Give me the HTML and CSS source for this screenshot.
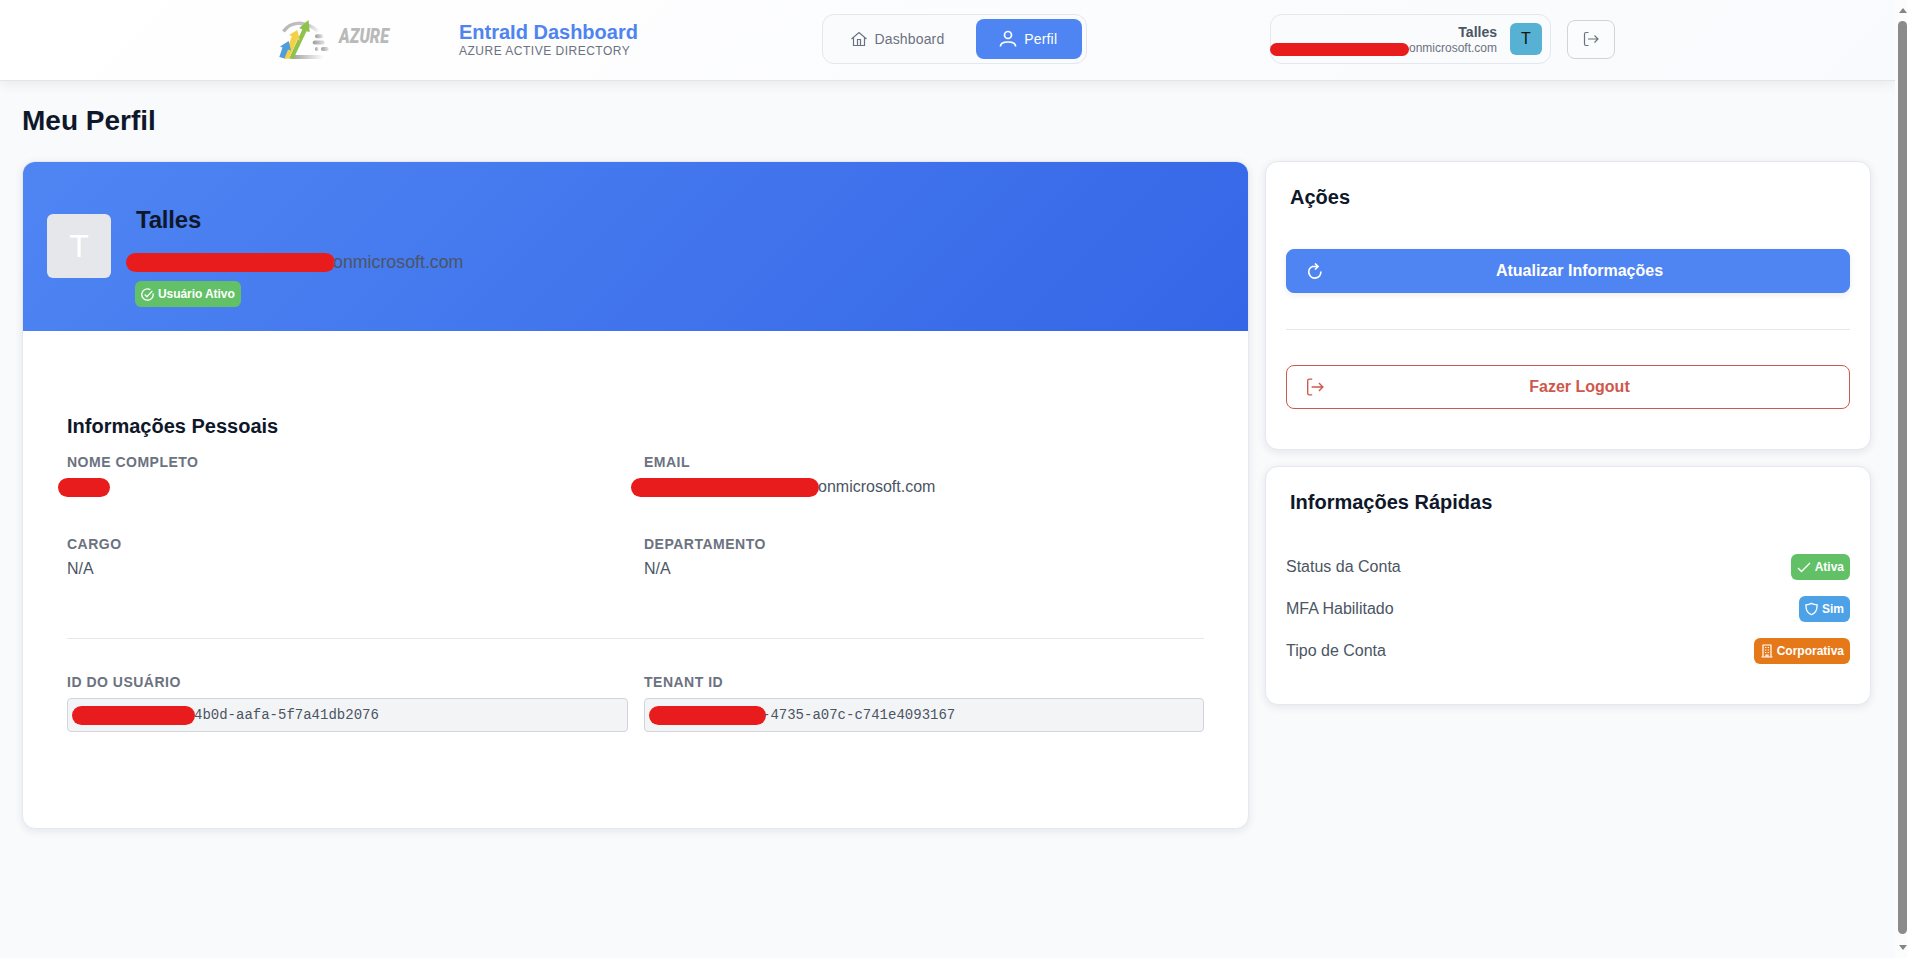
FILE: index.html
```html
<!DOCTYPE html>
<html lang="pt-BR">
<head>
<meta charset="utf-8">
<title>EntraId Dashboard</title>
<link rel="stylesheet" href="styles.css">
</head>
<body>
<div class="app">
  <div class="page">
    <header class="topbar">
      <div class="topbar-inner">
        <div class="brand">
          <svg class="logo" width="166" height="44" viewBox="0 0 166 44">
            <defs>
              <linearGradient id="base" x1="0" x2="1" y1="0" y2="0"><stop offset="0" stop-color="#a0a0a0"/><stop offset="1" stop-color="#ffffff"/></linearGradient>
              <linearGradient id="arc" x1="0" x2="1" y1="0" y2="0"><stop offset="0" stop-color="#b8b8b8"/><stop offset=".7" stop-color="#c4c4c4"/><stop offset="1" stop-color="#f4f4f4"/></linearGradient>
              <linearGradient id="dash" x1="0" x2="1" y1="0" y2="0"><stop offset="0" stop-color="#9c9c9c"/><stop offset="1" stop-color="#e4e4e4"/></linearGradient>
            </defs>
            <path d="M5.500 14.500C12 5 25 2.500 40 14" fill="none" stroke="url(#arc)" stroke-width="3.500"/>
            <path d="M16 38H46V42H14Z" fill="url(#base)"/>
            <g fill="url(#dash)"><rect x="37" y="17.300" width="8" height="4" rx="2"/><rect x="34.700" y="23.500" width="12" height="4" rx="2"/><rect x="37" y="30" width="3.500" height="4" rx="1.700"/><rect x="43" y="30" width="7.700" height="4" rx="2"/></g>
            <path d="M11 41.700L24.300 12.500L21.200 11L30.500 3L31.700 15L28.500 14.300L15.500 41.700Z" fill="#8fc14b"/>
            <path d="M5.800 41.700L13.800 19.300L11 18L19.300 13L22 23.500L19.300 22.500L11 41.700Z" fill="#f3d048"/>
            <path d="M1.300 40L4.500 30.500L2 29.500L10.700 24L13 33.500L10 32.500L6.500 41.500Z" fill="#4f9edb"/>
            <text x="61" y="26" class="logo-text" textLength="50" lengthAdjust="spacingAndGlyphs">AZURE</text>
          </svg>
          <div class="brand-text">
            <div class="brand-title">EntraId Dashboard</div>
            <div class="brand-sub">AZURE ACTIVE DIRECTORY</div>
          </div>
        </div>
        <nav class="nav">
          <a class="nav-item"><svg width="16" height="16" viewBox="0 0 16 16" class="icon"><path d="M.5 8L8 1.500 15.500 8M2.500 6.500V14.500H13.500V6.500M6.500 14.500V8.500H9.500V14.500"/></svg>Dashboard</a>
          <a class="nav-item active"><svg width="16" height="16" viewBox="0 0 16 16" class="icon person"><circle cx="8" cy="4" r="3.500"/><path d="M.4 15.500C.4 12.500 3 11 8 11s7.600 1.500 7.600 4.500"/></svg>Perfil</a>
        </nav>
        <div class="account">
          <div class="user">
            <div class="user-text">
              <div class="user-name">Talles</div>
              <div class="user-mail"><span class="mask mask-user"></span>onmicrosoft.com</div>
            </div>
            <div class="avatar">T</div>
          </div>
          <button class="exit"><svg width="16" height="16" viewBox="0 0 16 16" class="icon"><path d="M5.500 1.500H3Q1.500 1.500 1.500 3V13Q1.500 14.500 3 14.500H5.500M5 8H15M11.500 4.500L15 8L11.500 11.500"/></svg></button>
        </div>
      </div>
    </header>
    <main>
      <h1>Meu Perfil</h1>
      <div class="columns">
        <section class="card profile">
          <div class="hero">
            <div class="hero-avatar">T</div>
            <div class="hero-text">
              <h2>Talles</h2>
              <div class="hero-mail"><span class="mask mask-hero"></span>onmicrosoft.com</div>
              <span class="badge green"><svg width="13" height="13" viewBox="0 0 16 16" class="icon check-circle"><path d="M14.800 6.500A7 7 0 1 1 11.500 2M4.500 8L7.300 10.800L14 3.500"/></svg>Usuário Ativo</span>
            </div>
          </div>
          <div class="details">
            <h3>Informações Pessoais</h3>
            <div class="grid">
              <div class="field"><div class="label">NOME COMPLETO</div><div class="value"><span class="mask mask-name"></span></div></div>
              <div class="field"><div class="label">EMAIL</div><div class="value"><span class="mask mask-mail"></span>onmicrosoft.com</div></div>
              <div class="field"><div class="label">CARGO</div><div class="value">N/A</div></div>
              <div class="field"><div class="label">DEPARTAMENTO</div><div class="value">N/A</div></div>
            </div>
            <hr>
            <div class="grid">
              <div class="field"><div class="label">ID DO USUÁRIO</div><div class="code"><span class="mask mask-id"></span>4b0d-aafa-5f7a41db2076</div></div>
              <div class="field"><div class="label">TENANT ID</div><div class="code"><span class="mask mask-tenant"></span>-4735-a07c-c741e4093167</div></div>
            </div>
          </div>
        </section>
        <aside>
          <section class="card actions">
            <h3>Ações</h3>
            <button class="btn primary"><svg width="16" height="16" viewBox="0 0 16 16" class="icon refresh"><path d="M5.500 3.500A6 6 0 1 0 13.800 8.500M5 3.500H10.500M8 .5L11 3.500L8 6.500"/></svg><span>Atualizar Informações</span></button>
            <hr>
            <button class="btn danger"><svg width="18" height="18" viewBox="0 0 16 16" class="icon"><path d="M5.500 1H3Q1.500 1 1.500 2.500V13.500Q1.500 15 3 15H5.500M5 8H15M11.500 4.500L15 8L11.500 11.500"/></svg><span>Fazer Logout</span></button>
          </section>
          <section class="card quick">
            <h3>Informações Rápidas</h3>
            <div class="row">Status da Conta<span class="badge green"><svg width="14" height="14" viewBox="0 0 14 14" class="icon badge-icon"><path d="M1 8L4.500 11.500L13 3"/></svg>Ativa</span></div>
            <div class="row">MFA Habilitado<span class="badge blue"><svg width="13" height="14" viewBox="0 0 14 14" class="icon badge-icon"><path d="M7 1Q4.500 2.500 1 2.500C.8 8 2.500 11.500 7 13C11.500 11.500 13.200 8 13 2.500Q9.500 2.500 7 1Z"/></svg>Sim</span></div>
            <div class="row">Tipo de Conta<span class="badge orange"><svg width="12" height="14" viewBox="0 0 12 14" class="icon building"><path d="M2 13V1H10V13M.5 13H11.500M4 3.500H5.300M6.700 3.500H8M4 6H5.300M6.700 6H8M4 8.500H5.300M6.700 8.500H8M5 13V11H7V13"/></svg>Corporativa</span></div>
          </section>
        </aside>
      </div>
    </main>
  </div>
  <div class="scrollbar"><i class="arrow up"></i><i class="thumb"></i><i class="arrow down"></i></div>
</div>
</body>
</html>
```
FILE: styles.css
```css
* { box-sizing: border-box; }
body { margin: 0; font-family: "Liberation Sans", Arial, sans-serif; color: #4b5563; overflow: hidden; }
h1, h2, h3 { margin: 0; color: #0f172a; font-weight: 700; }
button { font-family: inherit; margin: 0; }
hr { margin: 0; border: 0; height: 1px; background: #e5e7eb; }

.app { display: flex; height: 958px; background: #f9fafc; }
.page { width: 1895px; flex: none; }
.icon { fill: none; stroke: currentColor; stroke-width: 1.2; flex: none; }

.topbar { height: 81px; border-bottom: 1px solid #e1e4ed; background: linear-gradient(135deg, #ffffff 0%, #f9fafd 100%); box-shadow: 0 3px 12px rgba(0, 0, 0, .07); }
.topbar-inner { width: 1337px; height: 78px; margin-left: 278px; display: flex; align-items: center; justify-content: space-between; }
.brand { display: flex; align-items: center; gap: 15px; width: 360px; }
.logo { flex: none; }
.logo-text { font: italic 900 19.500px Roboto, sans-serif; fill: #b9b9b9; }
.brand-title { font-size: 20px; line-height: 24px; font-weight: 700; color: #4f84f0; white-space: nowrap; }
.brand-sub { font-size: 12px; line-height: 14px; letter-spacing: .5px; color: #6b7280; white-space: nowrap; }

.nav { display: flex; gap: 8px; width: 265px; padding: 4px; border: 1px solid #e5e7ee; border-radius: 12px; background: #fafbfd; }
.nav-item { display: flex; align-items: center; gap: 8px; height: 40px; padding: 0 24px; font-size: 14px; letter-spacing: .15px; color: #6b7280; border-radius: 8px; }
.nav-item.active { flex: 1; padding: 0 0 0 24px; background: #4f85f3; color: #fff; }
.person { stroke-width: 1.7; overflow: visible; }

.account { display: flex; align-items: center; gap: 16px; }
.user { display: flex; align-items: center; gap: 13px; height: 50px; width: 281px; padding: 0 8px; justify-content: flex-end; border: 1px solid #e5e7ee; border-radius: 12px; background: #fafbfd; }
.user-text { text-align: right; }
.user-name { font-size: 14px; line-height: 17px; font-weight: 700; color: #4b5563; }
.user-mail { display: flex; align-items: center; font-size: 12px; line-height: 14px; color: #6b7280; }
.avatar { flex: none; width: 32px; height: 32px; border-radius: 6px; background: #56b1d2; color: #111; font-size: 16px; line-height: 31px; text-align: center; }
.exit { display: flex; align-items: center; justify-content: center; width: 48px; height: 39px; padding: 0; color: #6b7280; background: #fbfcfd; border: 1px solid #d1d5db; border-radius: 8px; }

.mask { display: inline-block; flex: none; background: #e81c1c; border-radius: 10px; height: 19px; }
.mask-user { width: 139px; height: 13px; margin: 2px 0 -1px -6px; }
.mask-hero { width: 209px; margin: 1px -2px 0 -10px; }
.mask-name { width: 52px; margin: 1px 0 0 -9px; }
.mask-mail { width: 188px; margin: 1px -1px 0 -13px; }
.mask-id { width: 123px; margin: 0 -1px 0 -4px; }
.mask-tenant { width: 117px; margin: 0 -4px 0 -4px; }

main { padding: 23px 24px 0 22px; }
h1 { font-size: 28px; line-height: 34px; margin-bottom: 23px; }
.columns { display: grid; grid-template-columns: 1227px 606px; gap: 16px; align-items: start; }
.card { background: #fff; border: 1px solid #e5e8ee; border-radius: 13px; box-shadow: 0 2px 8px rgba(15, 23, 42, .09); }
.profile { height: 668px; overflow: hidden; }
.hero { display: flex; height: 169px; padding: 37px 24px 0; background: linear-gradient(135deg, #4f85f3 0%, #3566e7 100%); }
.hero-avatar { width: 64px; height: 64px; margin: 15px 25px 0 0; border-radius: 6px; background: #e5e7eb; color: #fff; font-size: 32px; line-height: 65px; text-align: center; }
h2 { font-size: 24px; line-height: 42px; letter-spacing: -.2px; }
.hero-mail { display: flex; align-items: center; height: 24px; margin: 9px 0 7px; font-size: 17.800px; }
.hero .badge { margin-left: -1px; gap: 4px; letter-spacing: -.07px; }

.badge { display: inline-flex; align-items: center; gap: 4px; height: 26px; padding: 0 6px; border-radius: 6px; color: #fff; font-size: 12px; font-weight: 700; }
.green { background: #62c167; }
.blue { background: #4da1e6; }
.orange { background: #e5791a; padding-left: 7px; }
.badge-icon { stroke-width: 1.4; }
.check-circle { stroke-width: 1.6; }

.details { padding: 81px 44px 0; }
h3 { font-size: 20px; line-height: 28px; }
.details h3 { margin-bottom: 12px; }
.grid { display: grid; grid-template-columns: 561px 560px; column-gap: 16px; row-gap: 32px; }
.label { font-size: 14px; line-height: 20px; font-weight: 700; letter-spacing: .5px; color: #6b7280; }
.value { display: flex; align-items: center; height: 30px; font-size: 16px; }
.details hr { margin: 54px 0 33px; }
.code { display: flex; align-items: center; height: 34px; margin-top: 6px; padding: 0 8px; border: 1px solid #d1d5db; border-radius: 4px; background: #f3f4f6; font: 14px "Liberation Mono", monospace; }

aside { display: grid; gap: 16px; }
.actions { height: 289px; padding: 21px 20px 0; }
.quick { height: 239px; padding: 21px 20px 0; }
aside h3 { margin-left: 4px; }
.btn { display: flex; align-items: center; width: 564px; height: 44px; padding: 0 20px 0 19px; gap: 6px; border-radius: 8px; font-size: 16px; font-weight: 700; }
.btn span { flex: 1; text-align: center; }
.primary { margin-top: 38px; color: #fff; background: #4f85f3; border: 1px solid #4f85f3; box-shadow: 0 2px 6px rgba(15, 23, 42, .08); }
.danger { color: #ce584b; background: #fff; border: 1px solid #c95a4f; }
.refresh { stroke-width: 1.7; margin: 0 1px; }
.actions hr { margin: 36px 0 35px; }
.row { display: flex; justify-content: space-between; align-items: center; height: 26px; margin-bottom: 16px; font-size: 16px; }
.quick h3 { margin-bottom: 38px; }

.scrollbar { width: 12px; display: flex; flex-direction: column; align-items: flex-end; background: #fcfcfc; padding: 8px 0; }
.arrow { border: 4.500px solid transparent; border-top: 0; border-bottom: 5px solid #858585; }
.thumb { width: 9px; height: 913px; margin: 8px 0 11px; border-radius: 5px; background: #8b8b8b; }
.arrow.down { border-bottom: 0; border-top: 5px solid #858585; }
```
